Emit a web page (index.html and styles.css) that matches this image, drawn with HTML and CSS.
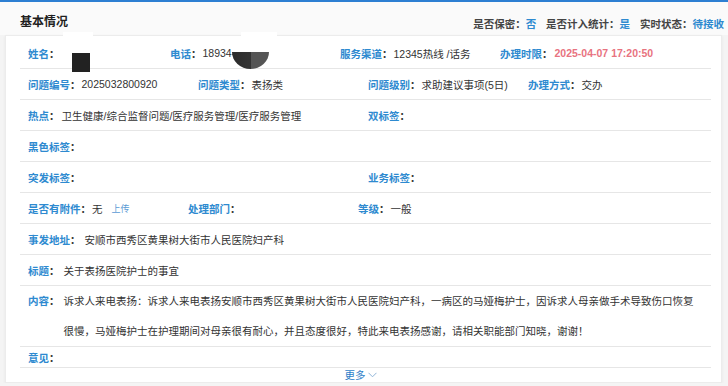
FILE: index.html
```html
<!DOCTYPE html>
<html lang="zh-CN">
<head>
<meta charset="utf-8">
<link rel="stylesheet" href="styles.css">
</head>
<body>
<div class="topbar"></div>
<div class="header">
  <div class="title">基本情况</div>
  <div class="status">
    <span>是否保密：</span><span class="sv">否</span>
    <span class="sp">是否计入统计：</span><span class="sv">是</span>
    <span class="sp">实时状态：</span><span class="sv">待接收</span>
  </div>
</div>
<div class="card">
  <div class="list">
    <div class="row r1">
      <div class="c w142"><b class="lb">姓名<i>：</i></b></div>
      <div class="c w170"><b class="lb">电话<i>：</i></b><span class="v">18934-</span></div>
      <div class="c w160"><b class="lb">服务渠道<i>：</i></b><span class="v">12345热线 /话务</span></div>
      <div class="c"><b class="lb">办理时限<i>：</i></b><span class="v date">2025-04-07 17:20:50</span></div>
      <span class="mask-white m1"></span>
      <span class="mask-black"></span>
      <span class="mask-white m2"></span>
      <span class="mask-blob"></span>
    </div>
    <div class="row">
      <div class="c w170"><b class="lb">问题编号<i>：</i></b><span class="v">2025032800920</span></div>
      <div class="c w170"><b class="lb">问题类型<i>：</i></b><span class="v">表扬类</span></div>
      <div class="c w160"><b class="lb">问题级别<i>：</i></b><span class="v">求助建议事项(5日)</span></div>
      <div class="c"><b class="lb">办理方式<i>：</i></b><span class="v">交办</span></div>
    </div>
    <div class="row">
      <div class="c w340"><b class="lb">热点<i>：</i></b><span class="v g2">卫生健康/综合监督问题/医疗服务管理/医疗服务管理</span></div>
      <div class="c"><b class="lb">双标签<i>：</i></b></div>
    </div>
    <div class="row">
      <div class="c"><b class="lb">黑色标签<i>：</i></b></div>
    </div>
    <div class="row">
      <div class="c w340"><b class="lb">突发标签<i>：</i></b></div>
      <div class="c"><b class="lb">业务标签<i>：</i></b></div>
    </div>
    <div class="row">
      <div class="c w160"><b class="lb">是否有附件<i>：</i></b><span class="v">无</span><a class="upload">上传</a></div>
      <div class="c w170"><b class="lb">处理部门<i>：</i></b></div>
      <div class="c"><b class="lb">等级<i>：</i></b><span class="v">一般</span></div>
    </div>
    <div class="row">
      <div class="c"><b class="lb">事发地址<i>：</i></b><span class="v g4">安顺市西秀区黄果树大街市人民医院妇产科</span></div>
    </div>
    <div class="row">
      <div class="c"><b class="lb">标题<i>：</i></b><span class="v g4">关于表扬医院护士的事宜</span></div>
    </div>
    <div class="row tall">
      <b class="lb">内容<i>：</i></b>
      <p class="v g4 content">诉求人来电表扬：诉求人来电表扬安顺市西秀区黄果树大街市人民医院妇产科，一病区的马娅梅护士，因诉求人母亲做手术导致伤口恢复很慢，马娅梅护士在护理期间对母亲很有耐心，并且态度很好，特此来电表扬感谢，请相关职能部门知晓，谢谢！</p>
    </div>
    <div class="row short">
      <div class="c"><b class="lb">意见<i>：</i></b></div>
    </div>
    <div class="more">更多<svg width="9" height="6" viewBox="0 0 9 6"><path d="M0.5 0.8 L4.5 4.8 L8.5 0.8" fill="none" stroke="#8fb4d8" stroke-width="1"/></svg></div>
  </div>
</div>
</body>
</html>
```
FILE: styles.css
```css
* { box-sizing: border-box; }
body {
  margin: 0;
  background: #f4f4f4;
  font-family: "Liberation Sans", "Noto Sans CJK SC", sans-serif;
  font-size: 10.5px;
  color: #333;
  overflow: hidden;
}
.topbar { height: 2px; background: #2d7fd2; }
.header {
  height: 33px;
  display: flex;
  justify-content: space-between;
  padding: 12px 4px 0 20px;
  background: #fafafa;
}
.title { font-size: 12px; font-weight: bold; color: #1f1f1f; line-height: 16px; }
.status { font-weight: bold; line-height: 16px; margin-top: 2px; color: #444; }
.status .sv { color: #2e8ad0; }
.status .sp { margin-left: 7px; }
.card {
  margin: 0 6px 0 5px;
  background: #fff;
  border: 1px solid #ececec;
  box-shadow: 0 1px 3px rgba(0, 0, 0, 0.06);
  padding-top: 2px;
}
.list { margin: 0 10px 0 14px; }
.row {
  position: relative;
  display: flex;
  align-items: center;
  height: 31px;
  border-bottom: 1px solid #e6e6e6;
  padding-left: 8px;
}
.row.tall { height: 61px; align-items: flex-start; }
.row.tall .lb { line-height: 30px; }
.row.short { height: 21px; }
.c { display: flex; align-items: center; flex: none; }
.w142 { width: 142px; }
.w160 { width: 160px; }
.w170 { width: 170px; }
.w340 { width: 340px; }
.lb { font-weight: bold; color: #2e8ad0; white-space: nowrap; }
.lb i { font-style: normal; color: #333; }
.v { color: #333; margin-left: 1px; white-space: nowrap; }
.g2 { margin-left: 2px; }
.g4 { margin-left: 4px; }
.date { font-weight: bold; color: #e8737f; margin-left: 2px; }
.upload { color: #5b9bd5; font-size: 9px; margin-left: 9px; }
.content {
  margin-top: 0;
  margin-bottom: 0;
  width: 636px;
  line-height: 30px;
  white-space: normal;
}
.more {
  height: 14px;
  display: flex;
  align-items: center;
  justify-content: center;
  gap: 2px;
  color: #2f7fc8;
  line-height: 14px;
  padding-right: 10px;
}
.mask-white { position: absolute; background: #fff; }
.m1 { left: 43px; top: -6px; width: 30px; height: 20px; }
.m2 { left: 221px; top: -6px; width: 36px; height: 20px; }
.mask-black {
  position: absolute;
  left: 52px; top: 15px;
  width: 18px; height: 19px;
  background: #222;
}
.mask-blob {
  position: absolute;
  left: 212px; top: 14px;
  width: 37px; height: 17px;
  background: linear-gradient(90deg, #2b2b2b 0%, #333 50%, #555 52%, #555 100%);
  border-radius: 0 0 50% 50% / 0 0 100% 100%;
}
```
